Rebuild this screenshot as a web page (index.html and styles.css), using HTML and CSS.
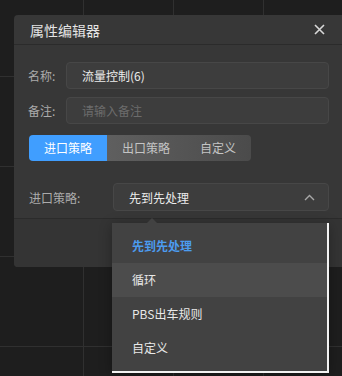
FILE: index.html
```html
<!DOCTYPE html>
<html lang="zh-CN">
<head>
    <meta charset="UTF-8">
    <meta name="viewport" content="width=device-width, initial-scale=1.0">
    <title>属性编辑器</title>
    <link rel="stylesheet" href="styles.css">
</head>
<body>

    <!-- Property editor dialog -->
    <div class="dialog">
        <div class="dialog-header">
            <span class="dialog-title">属性编辑器</span>
            <svg class="close-icon" width="11" height="11" viewBox="0 0 11 11">
                <path d="M1 1 L10 10 M10 1 L1 10" stroke="#d8d8d8" stroke-width="1.6" fill="none"/>
            </svg>
        </div>

        <div class="dialog-body">
            <div class="form-row">
                <span class="form-label">名称:</span>
                <div class="text-input">流量控制(6)</div>
            </div>
            <div class="form-row">
                <span class="form-label">备注:</span>
                <div class="text-input placeholder">请输入备注</div>
            </div>

            <div class="tabs">
                <div class="tab active">进口策略</div>
                <div class="tab-rest">
                    <div class="tab">出口策略</div>
                    <div class="tab">自定义</div>
                </div>
            </div>

            <div class="form-row strategy-row">
                <span class="form-label wide">进口策略:</span>
                <div class="select">
                    <span>先到先处理</span>
                    <svg width="11" height="7" viewBox="0 0 11 7">
                        <path d="M1 6 L5.5 1.5 L10 6" stroke="#a8a8a8" stroke-width="1.4" fill="none"/>
                    </svg>
                </div>
            </div>
        </div>

        <div class="dialog-footer"></div>
    </div>

    <!-- Select dropdown -->
    <div class="dropdown">
        <div class="dropdown-item selected">先到先处理</div>
        <div class="dropdown-item hover">循环</div>
        <div class="dropdown-item">PBS出车规则</div>
        <div class="dropdown-item">自定义</div>
    </div>

</body>
</html>
```

FILE: styles.css
```css
body {
    margin: 0;
    padding: 0;
    height: 376px;
    overflow: hidden;
    position: relative;
    font-family: "Noto Sans CJK SC", "Liberation Sans", sans-serif;
    font-size: 12px;
    color: #e6e6e6;
    background-color: #1e1e1e;
    /* canvas grid */
    background-image:
        linear-gradient(#303030 1px, transparent 1px),
        linear-gradient(90deg, #303030 1px, transparent 1px);
    background-size: 90px 90px;
    background-position: 83px 76px;
}

/* Dialog */
.dialog {
    position: absolute;
    top: 15px;
    left: 14px;
    width: 332px;
    height: 252px;
    background-color: #373737;
    border-radius: 4px;
    display: flex;
    flex-direction: column;
}

.dialog-header {
    height: 29px;
    padding: 0 21px 0 16px;
    display: flex;
    align-items: center;
    justify-content: space-between;
    border-bottom: 1px solid #2b2b2b;
}

.dialog-title {
    font-size: 14px;
    color: #e4e4e4;
}

.dialog-body {
    padding: 17px 17px 0 14px;
}

.form-row {
    display: flex;
    align-items: center;
    margin-bottom: 8px;
}

.form-label {
    width: 38px;
    flex-shrink: 0;
    color: #ababab;
}

.form-label.wide {
    width: 84px;
}

.text-input {
    flex: 1;
    height: 25px;
    line-height: 25px;
    padding: 0 15px;
    background-color: #3d3d3d;
    border: 1px solid #474747;
    border-radius: 4px;
    color: #ececec;
}

.text-input.placeholder {
    color: #6c6c6c;
}

/* Tabs */
.tabs {
    display: inline-flex;
    height: 26px;
    margin: 3px 0 0 1px;
    border-radius: 4px;
    overflow: hidden;
}

.tab {
    padding: 0 15px;
    line-height: 26px;
    color: #c4c4c4;
}

.tab.active {
    background-color: #409eff;
    color: #ffffff;
}

.tab-rest {
    display: flex;
    background: linear-gradient(to right, #5f5f5f, #4b4b4b);
}

.strategy-row {
    margin: 22px 0 0 1px;
}

.select {
    flex: 1;
    height: 26px;
    padding: 0 13px 0 15px;
    display: flex;
    align-items: center;
    justify-content: space-between;
    background-color: #3d3d3d;
    border: 1px solid #474747;
    border-radius: 4px;
    color: #ececec;
}

.dialog-footer {
    flex: 1;
    margin-top: 7px;
    border-top: 1px solid #2b2b2b;
    background-color: #343434;
    border-radius: 0 0 4px 4px;
}

/* Dropdown */
.dropdown {
    position: absolute;
    top: 223px;
    left: 112px;
    width: 215px;
    padding: 6px 0;
    background-color: #424242;
    border-right: 2px solid #f2f2f2;
    border-bottom: 2px solid #f2f2f2;
    box-shadow: 0 2px 12px rgba(0, 0, 0, 0.3);
}

.dropdown::before {
    content: "";
    position: absolute;
    top: -5px;
    left: 35px;
    border-left: 5px solid transparent;
    border-right: 5px solid transparent;
    border-bottom: 5px solid #424242;
}

.dropdown-item {
    height: 34px;
    line-height: 34px;
    padding-left: 20px;
    color: #e8e8e8;
}

.dropdown-item.selected {
    color: #4c9cf0;
    font-weight: bold;
}

.dropdown-item.hover {
    background-color: #4c4c4c;
}
```
